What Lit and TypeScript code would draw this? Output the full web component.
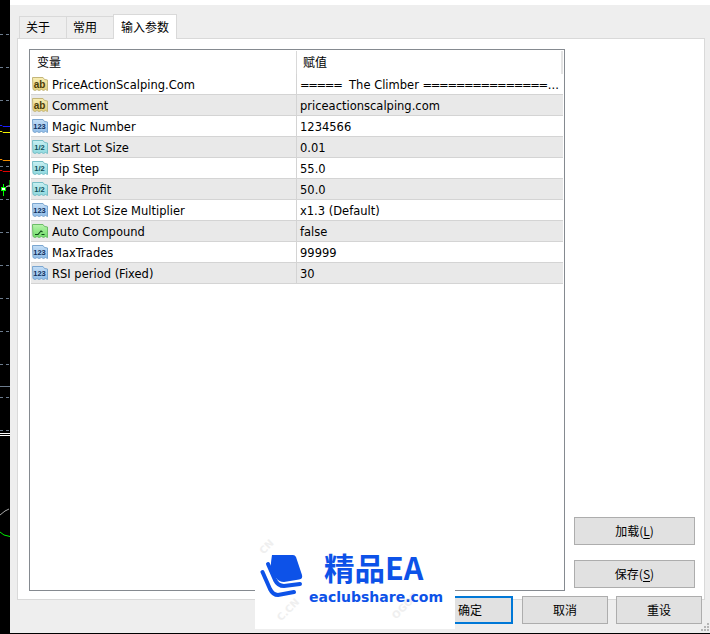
import { LitElement, html, css, svg } from "lit";
import { customElement } from "lit/decorators.js";

type Kind = "ab" | "num" | "frac" | "bool";
const rows: [Kind, string, string][] = [
  ["ab", "PriceActionScalping.Com", "===== The Climber ===============..."],
  ["ab", "Comment", "priceactionscalping.com"],
  ["num", "Magic Number", "1234566"],
  ["frac", "Start Lot Size", "0.01"],
  ["frac", "Pip Step", "55.0"],
  ["frac", "Take Profit", "50.0"],
  ["num", "Next Lot Size Multiplier", "x1.3 (Default)"],
  ["bool", "Auto Compound", "false"],
  ["num", "MaxTrades", "99999"],
  ["num", "RSI period (Fixed)", "30"],
];
const palette: Record<Kind, [string, string, string, string]> = {
  ab: ["#f8eeb4", "#e3cf78", "#c4b67a", "#4a3c08"],
  num: ["#c4def6", "#8fbce8", "#7ba6d0", "#0f2f5c"],
  frac: ["#c8f0f2", "#8ed8de", "#76bec6", "#10505c"],
  bool: ["#b8f4ac", "#6fdc68", "#6cbc68", "#10481a"],
};
const labels: Record<string, string> = { ab: "ab", num: "123", frac: "1/2" };

function icon(k: Kind) {
  const [a, b, s, t] = palette[k];
  const glyph =
    k === "bool"
      ? svg`<path d="M3 11.5h3l3-3.5 1.5 1M9.5 11.5h3" fill="none" stroke="${t}" stroke-width="1.1"/>`
      : k === "ab"
        ? svg`<text x="7.5" y="11.5" text-anchor="middle" class="g gab" fill="${t}">ab</text>`
        : svg`<text x="7.5" y="11" text-anchor="middle" class="g gnum" fill="${t}">${labels[k]}</text>`;
  return html`<svg class="ic" width="16" height="16" viewBox="0 0 16 16">
    <defs><linearGradient id="f-${k}" x1="0" y1="0" x2="0" y2="1"><stop offset="0" stop-color="${a}"/><stop offset="1" stop-color="${b}"/></linearGradient></defs>
    <path d="M.5 1.5h10.5l1.500 2 3 .5v10.500l-2-1-2 1-2-1-2.500 1-2-1-2 1-2-1z" fill="url(#f-${k})" stroke="${s}"/>
    ${glyph}
  </svg>`;
}

function valueText(v: string) {
  return v.split(/(=+)/).map((p) => (p.startsWith("=") ? html`<span class="eq">${p}</span>` : p));
}

@customElement("app-root")
export class AppRoot extends LitElement {
  static styles = css`
    :host { display: block; width: 710px; height: 634px; overflow: hidden; position: relative;
      font-family: Tahoma, "DejaVu Sans", "Noto Sans CJK SC", sans-serif; font-size: 11.5px; color: #000; }
    .root { display: flex; width: 710px; height: 634px; background: #000; }
    .chart { width: 10px; flex: none; display: block; }
    .win { flex: 1; display: flex; flex-direction: column; min-width: 0; margin-bottom: 1px; }
    .topgap { height: 5px; background: #fff; flex: none; }
    .body { flex: 1; background: #eeeeee; padding: 10px 5px 0 7px; display: flex; flex-direction: column; }
    .tabs { display: flex; height: 23px; flex: none; align-items: flex-end; position: relative; z-index: 1; }
    .tab { box-sizing: border-box; height: 22px; width: 48px; border: 1px solid #d9d9d9; border-bottom: none; margin-left: -1px;
      background: #eeeeee; display: flex; align-items: center; padding: 0 0 2px 6px; font-family: "Noto Sans CJK SC", sans-serif; font-size: 12px; }
    .tab.first { margin-left: 2px; }
    .tab.on { height: 25px; width: 64px; background: #fff; margin-bottom: -1px; padding-left: 7px; }
    .panel { height: 562px; flex: none; box-sizing: border-box; background: #fff; border: 1px solid #d9d9d9; padding: 10px 10px 8px 11px; display: flex; gap: 9px; }
    .table { box-sizing: border-box; width: 536px; height: 542px; flex: none; border: 1px solid #858a90; padding: 1px; }
    .row { display: grid; grid-template-columns: 265px 1fr; height: 21px; box-sizing: border-box; border-bottom: 1px solid #d4d4d4; align-items: center; }
    .row.alt { background: #e9e9e9; }
    .head { height: 23px; border-bottom: none; font-family: "Noto Sans CJK SC", sans-serif; font-size: 12px; }
    .head > div { padding: 0 0 2px 6px; box-sizing: border-box; height: 100%; display: flex; align-items: center; }
    .head > div + div { border-left: 1px solid #d9d9d9; border-right: 2px solid #e4e4e4; }
    .name { display: flex; align-items: center; gap: 4px; padding-left: 1px; white-space: nowrap; }
    .name span { padding-top: 1px; }
    .val { border-left: 1px solid #d4d4d4; box-sizing: border-box; height: 100%; padding: 1px 0 0 3px; display: flex; align-items: center; white-space: pre; }
    .eq { letter-spacing: -1.35px; padding-right: 1px; }
    .eq:first-child { padding-right: 4px; }
    .ic { flex: none; }
    .g { font-family: "Liberation Sans", sans-serif; font-weight: 700; }
    .gab { font-size: 10px; }
    .gnum { font-size: 7.5px; }
    .side { flex: 1; display: flex; flex-direction: column; justify-content: flex-end; gap: 15px; align-items: flex-start; padding-bottom: 3px; }
    .btn { box-sizing: border-box; border: 1px solid #adadad; background: #e1e1e1; display: flex; align-items: center; justify-content: center;
      font-family: "Noto Sans CJK SC", sans-serif; font-size: 12px; height: 28px; padding-bottom: 1px; }
    .side .btn { width: 121px; }
    .foot { display: flex; justify-content: flex-end; gap: 8px; padding-right: 3px; margin-top: -4px; height: 28px; position: relative; }
    .foot .btn { width: 86px; }
    .foot .btn.pri { border: 2px solid #0078d7; margin-right: 1px; }
    u { text-underline-offset: 2px; }
    .mark { position: absolute; left: 255px; top: 520px; width: 200px; height: 109px; background: #fff; overflow: hidden; }
    .mark svg { position: absolute; left: 5px; top: 33px; }
    .mark .t1 { position: absolute; left: 69px; top: 27px; font: 700 30.5px/40px "Noto Sans CJK SC", "DejaVu Sans", sans-serif; color: #0d52e8; white-space: nowrap; }
    .mark .t2 { position: absolute; left: 54px; top: 67px; font: 700 14px/20px "DejaVu Sans", sans-serif; color: #0d52e8; white-space: nowrap; }
    .wm { position: absolute; font: 700 10px/12px "DejaVu Sans", sans-serif; color: #efefef; transform: rotate(-45deg); white-space: nowrap; }
    .wm.a { left: 4px; top: 21px; }
    .wm.b { left: 20px; top: 84px; }
    .wm.c { left: 134px; top: 80px; }
    .grip { position: absolute; right: 0; bottom: 2px; }
  `;
  render() {
    return html`<div class="root">
      <svg class="chart" width="10" height="634" viewBox="0 0 10 634">
        <rect width="10" height="634" fill="#000"/>
        ${[34, 67, 100, 166, 199, 232, 265, 298, 331, 364, 397, 430].map(
          (y) => svg`<path d="M0 ${y}.5h3M6 ${y}.5h3" stroke="#6d7c8e"/>`
        )}
        <path d="M0 125.5h2l1 1h7" stroke="#1c1cff" fill="none"/><path d="M0 131.500h2l1 1h7" stroke="#f0f000" fill="none"/>
        <path d="M0 159.500h2l1 1h7" stroke="#f08c00" fill="none"/><path d="M0 170.500h2l1 1h7" stroke="#e00000" fill="none"/>
        <path d="M3.500 184v12" stroke="#0f0"/><path d="M9.500 180v7" stroke="#0a8a0a"/>
        <rect x="1.500" y="187.500" width="4" height="3" fill="#fff" stroke="#0f0"/>
        <path d="M6 187l2-1h2" stroke="#ddd" fill="none"/>
        <path d="M0 433.500h10M0 435.500h10" stroke="#fff"/><path d="M0 386.500h10" stroke="#6d7c8e"/>
        <path d="M0 515l5-4 4-2" stroke="#aaa" fill="none"/><path d="M0 532l4 3 6 1.500" stroke="#0e0" fill="none"/>
      </svg>
      <div class="win">
        <div class="topgap"></div>
        <div class="body">
          <div class="tabs">
            <div class="tab first">关于</div><div class="tab">常用</div><div class="tab on">输入参数</div>
          </div>
          <div class="panel">
            <div class="table">
              <div class="row head"><div>变量</div><div>赋值</div></div>
              ${rows.map(
                (r, i) => html`<div class="row ${i % 2 ? "alt" : ""}">
                  <div class="name">${icon(r[0])}<span>${r[1]}</span></div>
                  <div class="val">${valueText(r[2])}</div>
                </div>`
              )}
            </div>
            <div class="side">
              <div class="btn">加载(<u>L</u>)</div>
              <div class="btn">保存(<u>S</u>)</div>
            </div>
          </div>
          <div class="foot">
            <div class="btn pri">确定</div><div class="btn">取消</div><div class="btn">重设</div>
          </div>
        </div>
      </div>
      <svg class="grip" width="10" height="10" viewBox="0 0 10 10" fill="#b5b5b5">
        <rect x="7" y="1" width="2" height="2"/><rect x="4" y="4" width="2" height="2"/><rect x="7" y="4" width="2" height="2"/>
        <rect x="1" y="7" width="2" height="2"/><rect x="4" y="7" width="2" height="2"/><rect x="7" y="7" width="2" height="2"/>
      </svg>
      <div class="mark">
        <span class="wm a">CN</span><span class="wm b">C.CN</span><span class="wm c">OGOP</span>
        <svg width="46" height="46" viewBox="0 0 46 46">
          <path d="M12 2H33q2 0 3 2L42 22q1 4-3 4.500L24 29q-5 0-8-4L11 18q-1-3 1-16z" fill="#0d52e8"/>
          <path d="M8 11 15 27q3 6 9 6L40 31" fill="none" stroke="#0d52e8" stroke-width="4" stroke-linecap="round"/>
          <path d="M2.500 19 10 36q3 6 8 6L34 39" fill="none" stroke="#0d52e8" stroke-width="4" stroke-linecap="round"/>
        </svg>
        <div class="t1">精品EA</div>
        <div class="t2">eaclubshare.com</div>
      </div>
    </div>`;
  }
}
